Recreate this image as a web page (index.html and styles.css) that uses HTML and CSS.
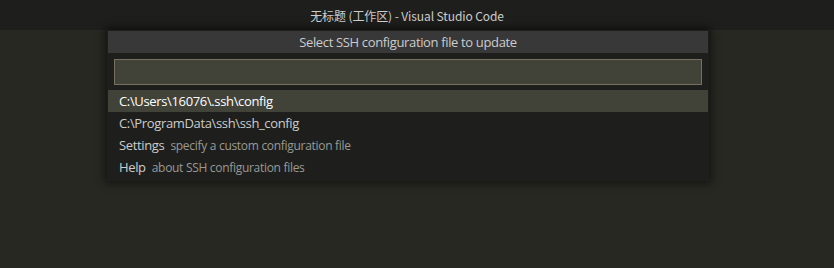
FILE: index.html
```html
<!DOCTYPE html>
<html lang="zh-CN">
<head>
  <meta charset="UTF-8">
  <title>无标题 (工作区) - Visual Studio Code</title>
  <link rel="stylesheet" href="styles.css">
</head>
<body>
  <div class="titlebar">
    <span class="window-title">无标题 (工作区) - Visual Studio Code</span>
  </div>

  <div class="workbench">
    <div class="quick-input">
      <div class="qi-title">Select SSH configuration file to update</div>
      <div class="qi-filter">
        <input type="text" class="qi-box" aria-label="filter">
      </div>
      <ul class="qi-list">
        <li class="qi-item selected"><span class="label">C:\Users\16076\.ssh\config</span></li>
        <li class="qi-item"><span class="label">C:\ProgramData\ssh\ssh_config</span></li>
        <li class="qi-item"><span class="label">Settings</span><span class="desc">specify a custom configuration file</span></li>
        <li class="qi-item"><span class="label">Help</span><span class="desc">about SSH configuration files</span></li>
      </ul>
    </div>
  </div>
</body>
</html>
```

FILE: styles.css
```css
body {
  margin: 0;
  height: 268px;
  overflow: hidden;
  background-color: #272822;
  font-family: "Open Sans", "Noto Sans", "Noto Sans CJK SC", sans-serif;
  color: #cccccc;
}

.titlebar {
  height: 30px;
  background-color: #1e1f1c;
  display: flex;
  align-items: center;
  justify-content: center;
  padding-right: 20px;
}

.window-title {
  font-family: "Noto Sans CJK SC", sans-serif;
  font-size: 12px;
  color: #cccccc;
  letter-spacing: -0.1px;
}

.workbench {
  padding-left: 107px;
}

.quick-input {
  width: 600px;
  background-color: #1e1f1c;
  padding: 1px 1px 3px 1px;
  box-shadow: 0 0 8px 2px rgba(0, 0, 0, 0.55);
}

.qi-title {
  height: 22px;
  line-height: 22px;
  background-color: #383838;
  text-align: center;
  font-size: 13px;
  color: #cccccc;
  letter-spacing: -0.35px;
}

.qi-filter {
  padding: 6px 6px 5px 6px;
}

.qi-box {
  display: block;
  box-sizing: border-box;
  width: 100%;
  height: 26px;
  margin: 0;
  background-color: #414339;
  border: 1px solid #75715e;
  outline: none;
  color: #cccccc;
}

.qi-list {
  list-style: none;
  margin: 0;
  padding: 0;
}

.qi-item {
  height: 22px;
  line-height: 23px;
  padding-left: 11px;
  font-size: 13px;
  letter-spacing: -0.35px;
  display: flex;
  align-items: baseline;
}

.qi-item.selected {
  background-color: #414339;
  color: #ffffff;
}

.desc {
  margin-left: 6px;
  font-size: 12px;
  color: #999995;
  letter-spacing: -0.3px;
}
```
